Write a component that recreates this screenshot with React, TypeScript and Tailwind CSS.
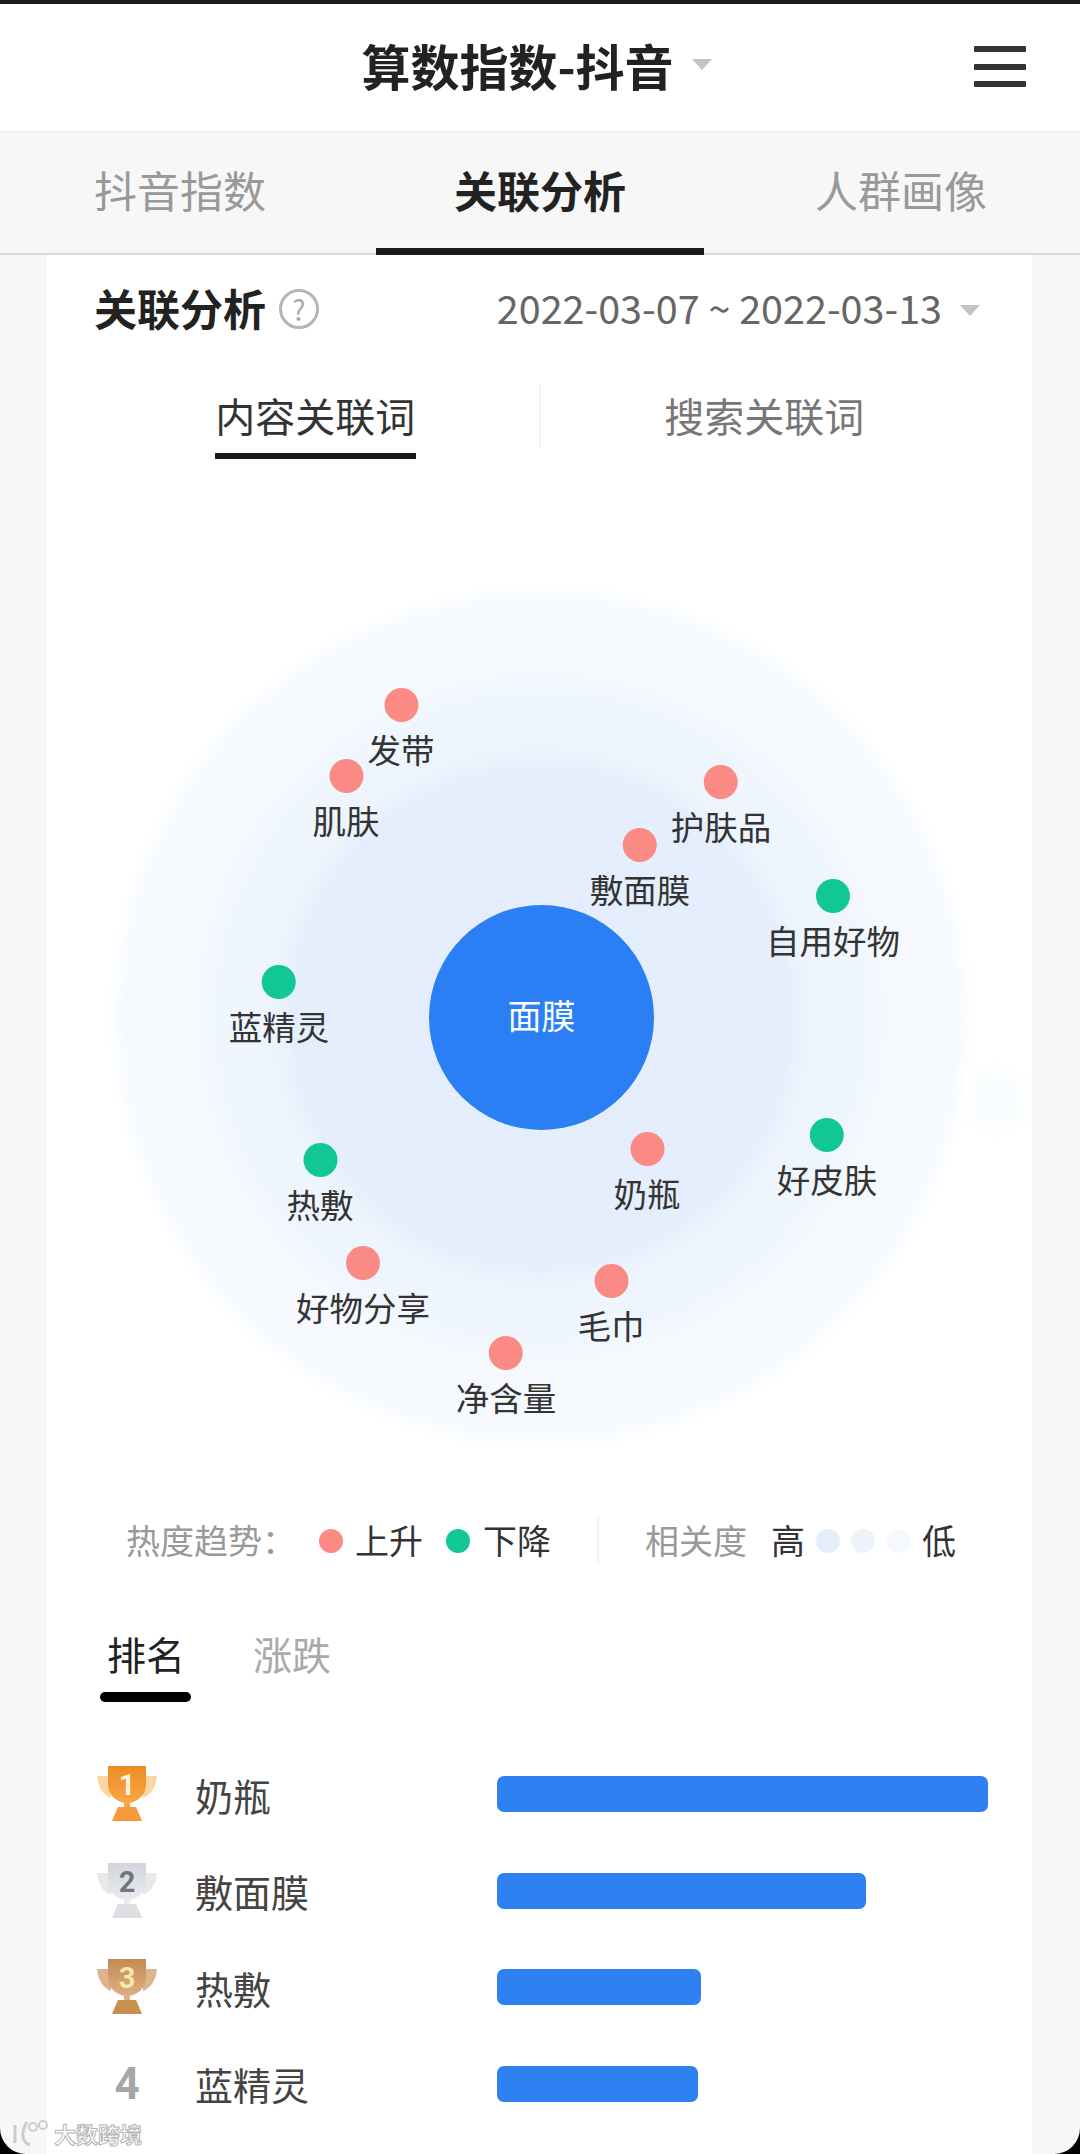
const CJK = 'font-["Noto_Sans_CJK_SC","Noto_Sans",sans-serif]'

interface GraphNode {
  label: string
  x: number
  y: number
  rising: boolean
}

const nodes: GraphNode[] = [
  { label: '发带', x: 354, y: 235, rising: true },
  { label: '肌肤', x: 299, y: 306, rising: true },
  { label: '护肤品', x: 674, y: 312, rising: true },
  { label: '敷面膜', x: 593, y: 375, rising: true },
  { label: '自用好物', x: 786, y: 426, rising: false },
  { label: '蓝精灵', x: 232, y: 512, rising: false },
  { label: '奶瓶', x: 600, y: 679, rising: true },
  { label: '好皮肤', x: 780, y: 665, rising: false },
  { label: '热敷', x: 273, y: 690, rising: false },
  { label: '好物分享', x: 316, y: 793, rising: true },
  { label: '毛巾', x: 564, y: 811, rising: true },
  { label: '净含量', x: 459, y: 883, rising: true },
]

const ranks = [
  { label: '奶瓶', width: 491 },
  { label: '敷面膜', width: 369 },
  { label: '热敷', width: 204 },
  { label: '蓝精灵', width: 201 },
]

const trophyColors = [
  { id: 'gold', top: '#ee8a22', bottom: '#fba94e', side: '#f9d6a4', base: '#f59a38', num: '#fdf3dc' },
  { id: 'silver', top: '#d2d5da', bottom: '#eceef0', side: '#e6e8ea', base: '#dcdee1', num: '#6f7680' },
  { id: 'bronze', top: '#c48a55', bottom: '#e0b48c', side: '#deb48e', base: '#c8904f', num: '#f8e8a8' },
]

function Caret({ className }: { className: string }) {
  return <span className={`h-0 w-0 border-x-[10px] border-t-[11px] border-x-transparent border-t-[#c4c4c4] ${className}`} />
}

function Trophy({ rank }: { rank: number }) {
  const c = trophyColors[rank]
  return (
    <svg width="60" height="56" viewBox="0 0 60 56">
      <defs>
        <linearGradient id={c.id} x1="0" y1="0" x2="0" y2="1">
          <stop offset="0" stopColor={c.top} />
          <stop offset="1" stopColor={c.bottom} />
        </linearGradient>
      </defs>
      <path d="M0 10h14v22C6 29 1 21 0 10zM60 10H46v22c8-3 13-11 14-22z" fill={c.side} />
      <path d="M11 0h38v19c0 10-8 16-16 18v5h-6v-5C19 35 11 29 11 19z" fill={`url(#${c.id})`} />
      <path d="M21 41h18l6 14H15z" fill={c.base} />
      <text x="30" y="29" textAnchor="middle" fontSize="29" fontWeight="700" fontFamily="Roboto, sans-serif" fill={c.num}>
        {rank + 1}
      </text>
    </svg>
  )
}

export default function App() {
  return (
    <div className="h-[2154px] w-[1080px] overflow-hidden bg-black">
      <div className={`relative flex h-full w-full flex-col overflow-hidden rounded-b-[26px] bg-[#f7f7f7] ${CJK}`}>
        <header className="relative flex h-[133px] shrink-0 items-center justify-center border-t-4 border-b-2 border-t-[#1c1c1c] border-b-[#efefef] bg-white pr-[7px] pb-[6px]">
          <h1 className="text-[49px] leading-none font-bold text-[#222]">算数指数-抖音</h1>
          <Caret className="ml-[18px]" />
          <div className="absolute top-[42px] right-[54px] flex h-[41px] w-[52px] flex-col justify-between">
            <span className="h-[6px] rounded-[1px] bg-[#333]" />
            <span className="h-[6px] rounded-[1px] bg-[#333]" />
            <span className="h-[6px] rounded-[1px] bg-[#333]" />
          </div>
        </header>

        <nav className="grid h-[122px] shrink-0 grid-cols-[372px_336px_372px] items-center border-b-2 border-[#d9d9d9] pb-[8px] text-[43px] text-[#999]">
          <span className="pr-[12px] text-center">抖音指数</span>
          <span className="relative flex h-full items-center justify-center font-bold text-[#222]">
            关联分析
            <span className="absolute inset-x-1 -bottom-[10px] h-[7px] bg-[#1a1a1a]" />
          </span>
          <span className="pl-[14px] text-center">人群画像</span>
        </nav>

        <main className="ml-[47px] flex w-[985px] grow flex-col bg-white">
          <div className="flex h-[110px] shrink-0 items-center pr-[52px] pl-[47px]">
            <h2 className="pb-[6px] text-[43px] font-bold text-[#222]">关联分析</h2>
            <span className="mb-[3px] ml-[13px] flex h-[40px] w-[40px] items-center justify-center rounded-full border-[3px] border-[#b5b5b5] text-[28px] text-[#aaa]">
              ?
            </span>
            <span className="ml-auto pb-[6px] text-[39.5px] text-[#666]">2022-03-07 ~ 2022-03-13</span>
            <Caret className="ml-[18px]" />
          </div>

          <div className="grid h-[105px] shrink-0 grid-cols-[1fr_2px_1fr] text-[40px]">
            <div className="flex justify-center pt-[20px] pl-[46px] text-[#333]">
              <span className="h-[74px] w-[201px] border-b-[6px] border-[#1a1a1a] whitespace-nowrap">内容关联词</span>
            </div>
            <span className="mt-[19px] h-[64px] bg-[#f4f4f4]" />
            <div className="flex justify-center pt-[20px] pr-[44px] text-[#777]">
              <span>搜索关联词</span>
            </div>
          </div>

          <section className="relative h-[1041px] shrink-0 bg-[radial-gradient(circle_440px_at_494px_547px,#e3edfb_0,#e4eefc_246px,#edf4fd_268px,#eff6fe_322px,#f5f9fe_346px,#f6faff_416px,#ffffff_434px)]">
            <span className="absolute top-[605px] left-[925px] h-[50px] w-[48px] bg-[#f8fcfe] blur-[8px]" />
            <div className="absolute top-[435px] left-[382px] flex h-[225px] w-[225px] items-center justify-center rounded-full bg-[#2b7ff5] pb-[6px] text-[34px] text-white">
              面膜
            </div>
            {nodes.map((node) => (
              <div
                key={node.label}
                className="absolute flex -translate-x-1/2 flex-col items-center"
                style={{ left: node.x, top: node.y - 17 }}
              >
                <span className={`h-[34px] w-[34px] rounded-full ${node.rising ? 'bg-[#fb8a85]' : 'bg-[#10c795]'}`} />
                <span className="mt-[5px] text-[33.5px] leading-[44px] whitespace-nowrap text-[#333]">{node.label}</span>
              </div>
            ))}
          </section>

          <div className="flex h-[60px] shrink-0 items-center pb-[3px] pl-[79px] text-[34px] whitespace-nowrap text-[#333]">
            <span className="w-[180px] text-[#999]">热度趋势：</span>
            <span className="mt-[3px] ml-[13px] h-[24px] w-[24px] rounded-full bg-[#fb8a85]" />
            <span className="ml-[12px]">上升</span>
            <span className="mt-[3px] ml-[23px] h-[24px] w-[24px] rounded-full bg-[#10c795]" />
            <span className="ml-[13px]">下降</span>
            <span className="mx-[46px] h-[44px] w-[2px] bg-[#efefef]" />
            <span className="text-[#999]">相关度</span>
            <span className="ml-[24px]">高</span>
            <span className="mt-[3px] ml-[11px] h-[24px] w-[24px] rounded-full bg-[#e3edfb]" />
            <span className="mt-[3px] ml-[11px] h-[24px] w-[24px] rounded-full bg-[#edf2fb]" />
            <span className="mt-[3px] ml-[11px] h-[24px] w-[24px] rounded-full bg-[#f5f8fc]" />
            <span className="ml-[12px]">低</span>
          </div>

          <div className="mt-[54px] flex shrink-0 gap-[68px] pl-[60px] text-[39px] leading-[56px]">
            <span className="relative text-[#222]">
              排名
              <span className="absolute top-[67px] -left-[7px] h-[10px] w-[91px] rounded-full bg-black" />
            </span>
            <span className="text-[#aaa]">涨跌</span>
          </div>

          <ul className="mt-[65px] flex flex-col">
            {ranks.map((rank, index) => (
              <li key={rank.label} className="flex h-[96.5px] shrink-0 items-center">
                <span className="ml-[50px] flex w-[60px] justify-center">
                  {index < 3 ? (
                    <Trophy rank={index} />
                  ) : (
                    <span className="font-['Roboto',sans-serif] text-[44px] font-bold text-[#a6a6a6]">4</span>
                  )}
                </span>
                <span className="ml-[38px] w-[302px] text-[38px] text-[#444]">{rank.label}</span>
                <span className="h-[36px] rounded-[7px] bg-[#2f80f0]" style={{ width: rank.width }} />
              </li>
            ))}
          </ul>
        </main>

        <div className="absolute bottom-[6px] left-[10px] flex items-center">
          <svg width="40" height="30" viewBox="0 0 40 30" fill="none" stroke="#cccccc" strokeWidth="3">
            <path d="M5 7v18M17 4C11 14 11 24 20 27" />
            <circle cx="23" cy="9" r="4" strokeWidth="2" />
            <circle cx="33" cy="7" r="4" strokeWidth="2" />
          </svg>
          <span className="ml-[4px] text-[22px] leading-none font-bold text-white [-webkit-text-stroke:1px_#b5b5b5]">大数跨境</span>
        </div>
      </div>
    </div>
  )
}
